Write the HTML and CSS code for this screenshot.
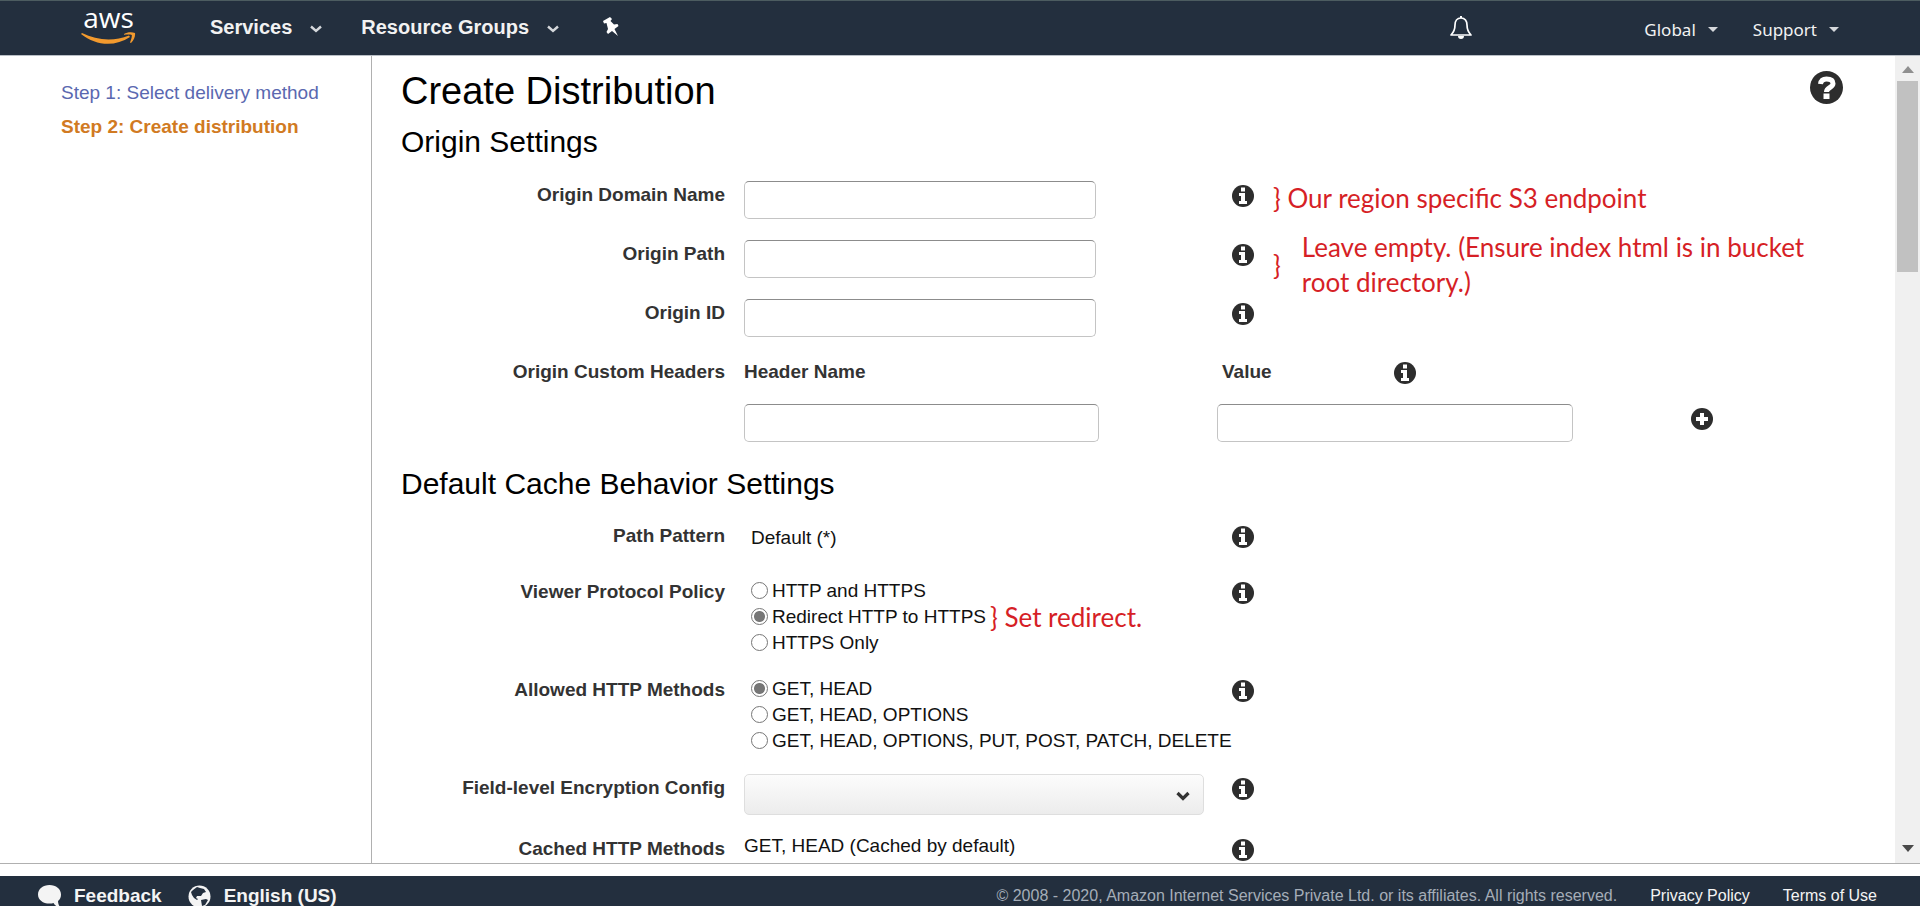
FILE: index.html
```html
<!DOCTYPE html>
<html lang="en">
<head>
<meta charset="utf-8">
<title>Create Distribution</title>
<link rel="stylesheet" href="styles.css">
</head>
<body>
<svg class="sprite" aria-hidden="true">
  <symbol id="info" viewBox="0 0 22 22"><circle cx="11" cy="11" r="11" fill="#2d2d2d"/><path d="M9 2.500h4v4H9zM7 8h6v8h2v3H7v-3h2v-5H7z" fill="#fff"/></symbol>
  <symbol id="plus" viewBox="0 0 22 22"><circle cx="11" cy="11" r="11" fill="#2d2d2d"/><path d="M9 5h4v4h4v4h-4v4H9v-4H5V9h4z" fill="#fff"/></symbol>
  <symbol id="chevron" viewBox="0 0 12 8"><path d="M1 1.500 6 6l5-4.500" fill="none" stroke="#d5d8dc" stroke-width="2.400"/></symbol>
  <symbol id="caret" viewBox="0 0 12 8"><path d="M1 1h10L6 6z" fill="#d5d8dc"/></symbol>
</svg>

<header class="topbar">
  <a class="logo" href="#" aria-label="AWS home">
    <span class="logo-text">aws</span>
    <svg class="logo-smile" viewBox="0 0 55 13"><path d="M1 1C16 8.500 33 9.500 48 3.500l1 1.500C34 15 15 14 0 2z" fill="#f29a2e"/><path d="M43 2C46 0 51-.2 54 1c.5 3-1 7-4 10l-1-.5c1-3 2-5 1.800-7.500-2-.8-4.800-.3-7.800-.2z" fill="#f29a2e"/></svg>
  </a>
  <nav class="nav-left">
    <button class="nav-item">Services <svg class="chev"><use href="#chevron"/></svg></button>
    <button class="nav-item">Resource Groups <svg class="chev"><use href="#chevron"/></svg></button>
    <button class="icon-btn" aria-label="Pin"><svg width="17" height="20" viewBox="0 0 17 20"><path d="M1 4 8 0l2 2-1.500 2L12 7.500l3.500-.5 1 2-4 3 3.500 7-6-5-4 3-1.500-2L6 12 4.500 6 2 6.500z" fill="#fff"/></svg></button>
  </nav>
  <nav class="nav-right">
    <button class="icon-btn bell" aria-label="Notifications"><svg width="22" height="24" viewBox="0 0 22 24"><path d="M11 2c-4 0-6 3-6 7 0 5-1 7-4 10h20c-3-3-4-5-4-10 0-4-2-7-6-7z" fill="none" stroke="#fff" stroke-width="1.700" stroke-linejoin="round"/><path d="M10 0h2v2h-2zM8 20h6a3 3 0 0 1-6 0z" fill="#fff"/></svg></button>
    <button class="nav-small">Global <svg class="chev"><use href="#caret"/></svg></button>
    <button class="nav-small">Support <svg class="chev"><use href="#caret"/></svg></button>
  </nav>
</header>

<div class="workspace">
  <aside class="steps">
    <a class="step" href="#">Step 1: Select delivery method</a>
    <a class="step current" href="#" aria-current="step">Step 2: Create distribution</a>
  </aside>

  <main class="content">
    <div class="title-row">
      <h1>Create Distribution</h1>
      <button class="icon-btn" aria-label="Help"><svg width="33" height="33" viewBox="0 0 33 33"><circle cx="16.500" cy="16.500" r="16.500" fill="#2d2d2d"/><path d="M10.500 13C11 9.500 13 8 16.500 8c4 0 6.500 1.500 6.500 4.500 0 4.500-6.500 3.500-6.500 8.500" fill="none" stroke="#fff" stroke-width="5"/><path d="M13.500 22.500h6v5.500h-6z" fill="#fff"/></svg></button>
    </div>

    <section class="group origin">
      <h2>Origin Settings</h2>
      <div class="row">
        <label class="name" for="domain">Origin Domain Name</label>
        <input class="text" id="domain" type="text">
        <button class="icon-btn info" aria-label="Info"><svg><use href="#info"/></svg></button>
        <p class="note">} Our region specific S3 endpoint</p>
      </div>
      <div class="row">
        <label class="name" for="path">Origin Path</label>
        <input class="text" id="path" type="text">
        <button class="icon-btn info" aria-label="Info"><svg><use href="#info"/></svg></button>
        <div class="note-anchor"><div class="note note-over"><span>}</span><p>Leave empty. (Ensure index html is in bucket<br>root directory.)</p></div></div>
      </div>
      <div class="row">
        <label class="name" for="oid">Origin ID</label>
        <input class="text" id="oid" type="text">
        <button class="icon-btn info" aria-label="Info"><svg><use href="#info"/></svg></button>
      </div>
      <div class="row">
        <span class="name">Origin Custom Headers</span>
        <div class="headers">
          <label class="name start" for="hname">Header Name</label>
          <div class="value-head"><label class="name" for="hvalue">Value</label><button class="icon-btn info" aria-label="Info"><svg><use href="#info"/></svg></button></div>
          <span></span>
          <input class="text" id="hname" type="text">
          <input class="text" id="hvalue" type="text">
          <button class="icon-btn info" aria-label="Add header"><svg><use href="#plus"/></svg></button>
        </div>
      </div>
    </section>

    <section class="group cache">
      <h2>Default Cache Behavior Settings</h2>
      <div class="row">
        <span class="name">Path Pattern</span>
        <p class="static inset">Default (*)</p>
        <button class="icon-btn info" aria-label="Info"><svg><use href="#info"/></svg></button>
      </div>
      <div class="row">
        <span class="name">Viewer Protocol Policy</span>
        <div class="radios">
          <label><input type="radio" name="vpp">HTTP and HTTPS</label>
          <label><input type="radio" name="vpp" checked>Redirect HTTP to HTTPS <span class="note inline">} Set redirect.</span></label>
          <label><input type="radio" name="vpp">HTTPS Only</label>
        </div>
        <button class="icon-btn info" aria-label="Info"><svg><use href="#info"/></svg></button>
      </div>
      <div class="row">
        <span class="name">Allowed HTTP Methods</span>
        <div class="radios">
          <label><input type="radio" name="methods" checked>GET, HEAD</label>
          <label><input type="radio" name="methods">GET, HEAD, OPTIONS</label>
          <label><input type="radio" name="methods">GET, HEAD, OPTIONS, PUT, POST, PATCH, DELETE</label>
        </div>
        <button class="icon-btn info" aria-label="Info"><svg><use href="#info"/></svg></button>
      </div>
      <div class="row">
        <label class="name" for="fle">Field-level Encryption Config</label>
        <div class="select-wrap">
          <select id="fle"><option></option></select>
          <svg class="select-arrow" viewBox="0 0 14 10"><path d="M1.500 2 7 7.500 12.500 2" fill="none" stroke="#333" stroke-width="3.200"/></svg>
        </div>
        <button class="icon-btn info" aria-label="Info"><svg><use href="#info"/></svg></button>
      </div>
      <div class="row">
        <span class="name">Cached HTTP Methods</span>
        <p class="static">GET, HEAD (Cached by default)</p>
        <button class="icon-btn info" aria-label="Info"><svg><use href="#info"/></svg></button>
      </div>
    </section>
  </main>

  <div class="scrollbar" aria-hidden="true">
    <svg width="12" height="7" viewBox="0 0 12 7"><path d="M0 7 6 0l6 7z" fill="#8f8f8f"/></svg>
    <div class="thumb"></div>
    <svg width="12" height="7" viewBox="0 0 12 7"><path d="M0 0h12L6 7z" fill="#4a4a4a"/></svg>
  </div>
</div>

<footer class="footer">
  <a class="foot-main" href="#"><svg width="23" height="23" viewBox="0 0 23 23"><path d="M11.500 0C18 0 23 4 23 9.500c0 3-1 5-3 6.500.2 3 1 5 3 7-4-1-6-2.500-7.500-5-1 .5-2.500.6-4 .6C5 18.600 0 15 0 9.500S5 0 11.500 0z" fill="#f4f4f4"/></svg>Feedback</a>
  <a class="foot-main" href="#"><svg width="23" height="23" viewBox="0 0 23 23"><circle cx="11.500" cy="11.500" r="11" fill="#f4f4f4"/><path d="M5 5l4-3 3 1 4 1 2 3-3 1-2 3-4 0-1 2 2 1-1 1-3-2-2-3-1-3z" fill="#232f3e"/><path d="M13 15l5-1 2 1-3 5-3 1z" fill="#232f3e"/></svg>English (US)</a>
  <span class="copyright">© 2008 - 2020, Amazon Internet Services Private Ltd. or its affiliates. All rights reserved.</span>
  <a class="foot-link" href="#">Privacy Policy</a>
  <a class="foot-link" href="#">Terms of Use</a>
</footer>
</body>
</html>
```
FILE: styles.css
```css
* { box-sizing: border-box; }

body {
  margin: 0;
  height: 100vh;
  display: flex;
  flex-direction: column;
  overflow: hidden;
  background: #fff;
  color: #111;
  font: 19px/28px "Liberation Sans", Arial, sans-serif;
}

h1, h2, p { margin: 0; font-weight: 400; }
a { text-decoration: none; }
.sprite { position: absolute; width: 0; height: 0; }

button {
  border: 0;
  padding: 0;
  background: none;
  color: inherit;
  font: inherit;
}
.icon-btn { display: flex; flex: none; }

/* Top bar */
.topbar {
  display: flex;
  flex: none;
  align-items: center;
  height: 56px;
  padding: 0 80px 0 81px;
  background: #232f3e;
  border-top: 1px solid #4c5c60;
  border-bottom: 1px solid #b9bfc6;
  color: #f2f2f2;
}
.logo { display: flex; flex-direction: column; align-items: center; width: 55px; padding-bottom: 6px; color: #fff; }
.logo-text { font: 500 28px/22px "Open Sans", "Noto Sans", sans-serif; }
.logo-smile { width: 55px; height: 13px; margin-top: 4px; }
.nav-left { display: flex; align-items: center; gap: 39px; padding: 0 0 3px 74px; }
.nav-item { display: flex; align-items: center; gap: 18px; font-size: 20px; font-weight: 700; }
.nav-left .icon-btn { margin-left: 4px; }
.chev { width: 12px; height: 8px; margin-top: 4px; }
.nav-right { display: flex; align-items: center; gap: 34px; margin-left: auto; }
.nav-small { display: flex; align-items: center; gap: 11px; padding-top: 4px; font: 17px/24px "Noto Sans", sans-serif; }
.nav-small .chev { margin-top: 0; }
.bell { margin-right: 138px; }

/* Workspace */
.workspace { display: flex; flex: 1; min-height: 0; border-bottom: 1px solid #b0b0b0; }
.steps {
  display: flex;
  flex: none;
  flex-direction: column;
  width: 372px;
  padding: 20px 20px 0 61px;
  border-right: 1px solid #b0b0b0;
}
.step { line-height: 34px; color: #5a68b0; }
.step.current { color: #d17a22; font-weight: 700; }

.content { flex: 1; min-width: 0; overflow: hidden; padding: 13px 52px 0 29px; }
.title-row { display: flex; justify-content: space-between; align-items: flex-start; color: #000; }
.title-row .icon-btn { margin-top: 2px; }
h1 { font-size: 38px; line-height: 44px; }
h2 { font-size: 30px; line-height: 36px; color: #000; }

.group { display: grid; }
.origin { row-gap: 21px; padding-top: 11px; }
.cache { row-gap: 20px; padding-top: 24px; }
.row {
  display: grid;
  grid-template-columns: minmax(0, 324fr) minmax(0, 469fr) 22px minmax(0, 570fr);
  column-gap: 19px;
  align-items: start;
}
.name { color: #333; font-weight: 700; text-align: right; white-space: nowrap; }
.name.start { text-align: left; }
.info { margin-top: 4px; }
.info svg { width: 22px; height: 22px; }

.text {
  width: 75%;
  height: 38px;
  padding: 0 8px;
  border: 1px solid #c4c4c4;
  border-top-color: #8c8c8c;
  border-radius: 5px;
  background: #fff;
  font: inherit;
}

.headers {
  grid-column: 2 / -1;
  display: grid;
  grid-template-columns: 473fr 474fr 152fr;
  row-gap: 18px;
}
.value-head { display: flex; justify-content: space-between; width: 42%; height: 28px; padding-left: 5px; }

.note { color: #d61f26; font: 26px/35px Lato, "Open Sans", sans-serif; white-space: nowrap; }
.note-anchor { position: relative; }
.note-over { position: absolute; top: -10px; left: 0; display: flex; align-items: center; gap: 21px; }
.note.inline { line-height: 26px; }

.static { line-height: 22px; }
.static.inset { padding: 5px 0 9px 7px; }
.radios { padding-left: 7px; line-height: 28px; }
.radios label { display: flex; align-items: center; gap: 4px; height: 26px; white-space: nowrap; }
.radios input {
  appearance: none;
  flex: none;
  width: 17px;
  height: 17px;
  margin: 0 0 2px;
  border: 1px solid #767676;
  border-radius: 50%;
  background: #fff;
}
.radios input:checked { background: radial-gradient(circle, #767676 5px, #fff 6px); }

.select-wrap { position: relative; }
select {
  display: block;
  appearance: none;
  width: 98%;
  height: 41px;
  border: 1px solid #dedede;
  border-radius: 5px;
  background: linear-gradient(#fcfcfc, #ececec);
  font: inherit;
}
.select-arrow { position: absolute; right: 23px; top: 17px; width: 14px; height: 10px; pointer-events: none; }

.scrollbar {
  display: flex;
  flex: none;
  flex-direction: column;
  align-items: center;
  width: 25px;
  padding: 10px 0 11px;
  background: #f0f0f0;
}
.thumb { width: 21px; height: 191px; margin: 8px 0 auto; background: #c1c1c1; }

/* Footer */
.footer {
  display: flex;
  flex: none;
  align-items: flex-start;
  height: 30px;
  margin-top: 12px;
  padding: 6px 43px 0 38px;
  overflow: hidden;
  background: #232f3e;
  color: #f4f4f4;
}
.foot-main { display: flex; align-items: center; gap: 13px; margin-right: 26px; color: #f4f4f4; font-weight: 700; }
.copyright { margin-left: auto; color: #a5adb8; font-size: 16px; }
.foot-link { margin-left: 33px; color: #f4f4f4; font-size: 16px; }
```
